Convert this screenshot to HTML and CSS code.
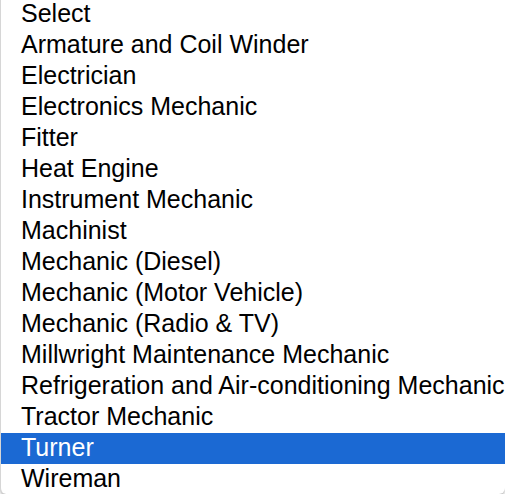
FILE: index.html
```html
<!DOCTYPE html>
<html lang="en">
<head>
    <meta charset="UTF-8">
    <meta name="viewport" content="width=device-width, initial-scale=1.0">
    <title>Trade</title>
    <link rel="stylesheet" href="styles.css">
</head>
<body>
    <div class="dropdown">
        <ul class="opciones">
            <li class="opcion">Select</li>
            <li class="opcion">Armature and Coil Winder</li>
            <li class="opcion">Electrician</li>
            <li class="opcion">Electronics Mechanic</li>
            <li class="opcion">Fitter</li>
            <li class="opcion">Heat Engine</li>
            <li class="opcion">Instrument Mechanic</li>
            <li class="opcion">Machinist</li>
            <li class="opcion">Mechanic (Diesel)</li>
            <li class="opcion">Mechanic (Motor Vehicle)</li>
            <li class="opcion">Mechanic (Radio &amp; TV)</li>
            <li class="opcion">Millwright Maintenance Mechanic</li>
            <li class="opcion">Refrigeration and Air-conditioning Mechanic</li>
            <li class="opcion">Tractor Mechanic</li>
            <li class="opcion seleccionada">Turner</li>
            <li class="opcion">Wireman</li>
        </ul>
    </div>
</body>
</html>
```

FILE: styles.css
```css
html {
    background-color: #fff;
}
body {
    margin: 0;
    font-family: "Liberation Sans", Arial, sans-serif;
    font-size: 25px;
    color: #000;
    overflow: hidden;
}
.dropdown {
    margin-top: -1px;
    height: 495px;
    background: #fff;
    border-left: 1px solid #d6d6d6;
    border-radius: 0 0 6px 6px;
    box-shadow: 0 2px 3px rgba(0,0,0,0.28);
    overflow: hidden;
}
.opciones {
    list-style-type: none;
    margin: 0;
    padding: 0;
}
.opcion {
    box-sizing: border-box;
    height: 31px;
    line-height: 28px;
    padding: 0 0 3px 20px;
    white-space: nowrap;
}
.seleccionada {
    background-color: #1b69d3;
    color: #fff;
}
```
